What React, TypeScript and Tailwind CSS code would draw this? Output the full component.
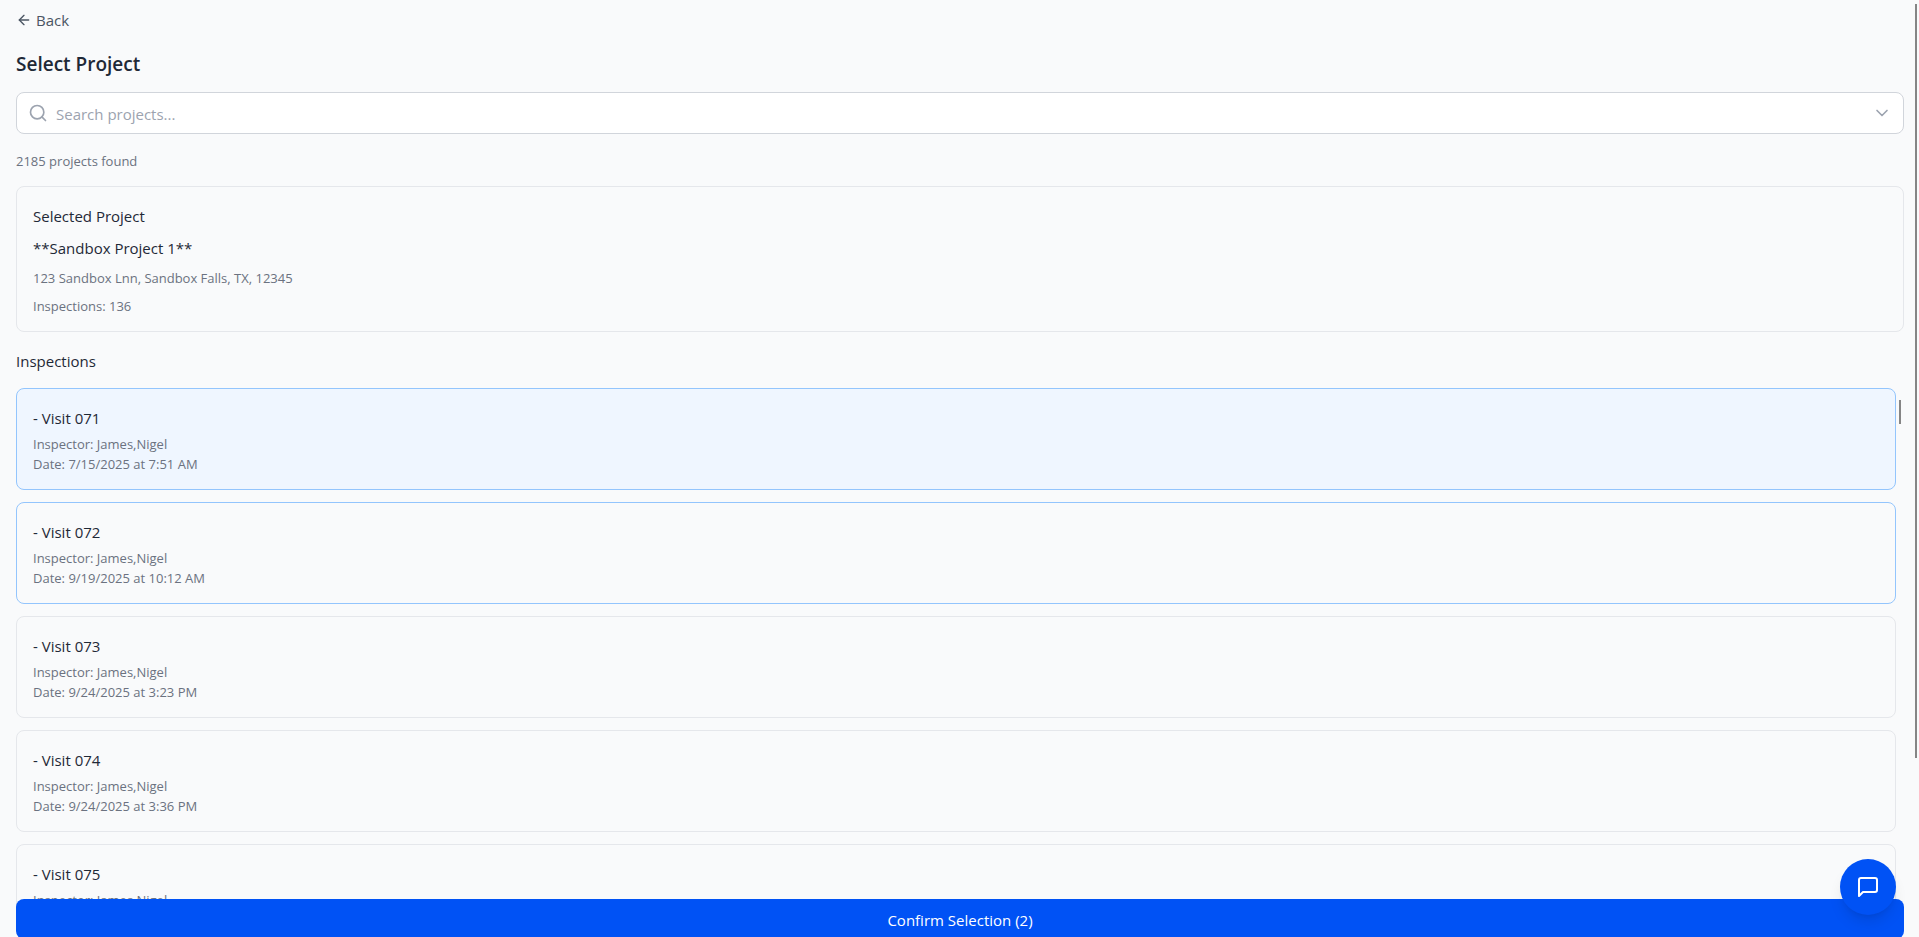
import { useState } from 'react';
import { ArrowLeft, ChevronDown, Search } from 'lucide-react';

interface Inspection {
    id: string;
    name: string;
    inspector: string;
    date: string;
}

const inspections: Inspection[] = [
    { id: '071', name: '- Visit 071', inspector: 'James,Nigel', date: '7/15/2025 at 7:51 AM' },
    { id: '072', name: '- Visit 072', inspector: 'James,Nigel', date: '9/19/2025 at 10:12 AM' },
    { id: '073', name: '- Visit 073', inspector: 'James,Nigel', date: '9/24/2025 at 3:23 PM' },
    { id: '074', name: '- Visit 074', inspector: 'James,Nigel', date: '9/24/2025 at 3:36 PM' },
    { id: '075', name: '- Visit 075', inspector: 'James,Nigel', date: '9/26/2025 at 9:05 AM' },
];

const ChatIcon = () => (
    <svg
        className="w-6 h-6"
        viewBox="0 0 24 24"
        fill="none"
        stroke="currentColor"
        strokeWidth="2"
        strokeLinecap="round"
        strokeLinejoin="round"
        aria-hidden="true"
    >
        <path d="M21 15a2 2 0 0 1-2 2H7l-4 4V5a2 2 0 0 1 2-2h14a2 2 0 0 1 2 2z" />
    </svg>
);

interface InspectionCardProps {
    inspection: Inspection;
    selected: boolean;
    active: boolean;
    onToggle: () => void;
}

function InspectionCard({ inspection, selected, active, onToggle }: InspectionCardProps) {
    return (
        <button
            type="button"
            aria-pressed={selected}
            onClick={onToggle}
            className={`block w-full shrink-0 rounded-lg border px-4 pt-[17px] pb-[15px] text-left ${selected ? 'border-[#93c5fd]' : 'border-[#e5e7eb]'} ${active ? 'bg-[#eff6ff]' : 'bg-[#f9fafb]'}`}
        >
            <span className="block pb-1 text-[15px] leading-6 text-[#1f2937]">{inspection.name}</span>
            <span className="block text-[13px] leading-5 text-[#6b7280]">Inspector: {inspection.inspector}</span>
            <span className="block text-[13px] leading-5 text-[#6b7280]">Date: {inspection.date}</span>
        </button>
    );
}

export default function App() {
    const [query, setQuery] = useState('');
    const [selected, setSelected] = useState<string[]>(['071', '072']);
    const [active, setActive] = useState('071');

    const toggle = (id: string) => {
        setActive(id);
        setSelected((prev) => (prev.includes(id) ? prev.filter((x) => x !== id) : [...prev, id]));
    };

    return (
        <div className="relative flex h-screen flex-col overflow-hidden bg-[#f9fafb] pl-4 pr-[15px] pt-2 font-['Open_Sans','Noto_Sans',sans-serif] text-[#1f2937]">
            <button type="button" className="flex h-6 items-center gap-1 self-start text-[15px] text-[#4b5563]">
                <ArrowLeft className="h-4 w-4" />
                Back
            </button>

            <h1 className="mt-4 text-[19px] leading-8 font-semibold">Select Project</h1>

            {/* Search */}
            <div className="mt-3 flex h-[42px] shrink-0 items-center gap-2 rounded-lg border border-[#d1d5db] bg-white px-[11px]">
                <Search className="h-5 w-5 shrink-0 text-[#9ca3af]" />
                <input
                    type="text"
                    aria-label="Search projects"
                    placeholder="Search projects..."
                    value={query}
                    onChange={(e) => setQuery(e.target.value)}
                    className="h-full min-w-0 flex-1 bg-transparent pt-0.5 text-[15px] outline-none placeholder:text-[#9ca3af]"
                />
                <button type="button" aria-label="Show projects">
                    <ChevronDown className="h-5 w-5 text-[#9ca3af]" />
                </button>
            </div>

            <p className="mt-[17px] text-[13px] leading-5 text-[#6b7280]">2185 projects found</p>

            {/* Selected project */}
            <section className="mt-[15px] shrink-0 rounded-lg border border-[#e5e7eb] px-4 pt-[17px] pb-[15px]">
                <h2 className="text-[15px] leading-6">Selected Project</h2>
                <p className="mt-2 text-[15px] leading-6">**Sandbox Project 1**</p>
                <p className="mt-2 text-[13px] leading-5 text-[#6b7280]">123 Sandbox Lnn, Sandbox Falls, TX, 12345</p>
                <p className="mt-2 text-[13px] leading-5 text-[#6b7280]">Inspections: 136</p>
            </section>

            <h2 className="mt-[17px] text-[15px] leading-6">Inspections</h2>

            {/* Inspection list, runs on under the confirm button's rounded corners */}
            <div className="relative mt-[15px] -mb-2 flex min-h-0 flex-1 flex-col gap-3 overflow-hidden pr-2">
                {inspections.map((inspection) => (
                    <InspectionCard
                        key={inspection.id}
                        inspection={inspection}
                        selected={selected.includes(inspection.id)}
                        active={active === inspection.id}
                        onToggle={() => toggle(inspection.id)}
                    />
                ))}
                <div className="absolute right-[3px] top-3 h-6 w-0.5 bg-[#858585]" />
            </div>

            <button
                type="button"
                className="relative -mb-0.5 h-10 shrink-0 rounded-lg bg-[#0052f5] pt-0.5 text-[15px] text-white"
            >
                Confirm Selection ({selected.length})
            </button>

            {/* Chat launcher */}
            <button
                type="button"
                aria-label="Open chat"
                className="absolute bottom-[22px] right-[23px] flex h-14 w-14 items-center justify-center rounded-full bg-[#0052f5] text-white shadow-lg"
            >
                <ChatIcon />
            </button>

            {/* Page scroll thumb */}
            <div className="absolute right-0.5 top-1 h-[80.5%] w-0.5 bg-[#858585]" />
        </div>
    );
}
